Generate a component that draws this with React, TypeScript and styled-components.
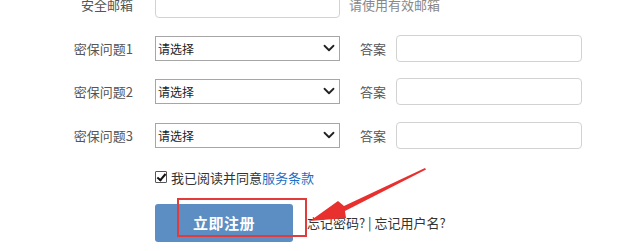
import styled, { createGlobalStyle } from "styled-components";
import { ChevronDown } from "lucide-react";

const GlobalStyle = createGlobalStyle`
  html, body {
    margin: 0;
    padding: 0;
    background: #fff;
    overflow: hidden;
  }
  body {
    font-family: "Noto Sans CJK SC", "Noto Sans", sans-serif;
    font-size: 13px;
    color: #555;
  }
`;

const Page = styled.div`
  position: relative;
  width: 620px;
  height: 251px;
  overflow: hidden;
`;

const Form = styled.div`
  display: flex;
  flex-direction: column;
  margin-top: -17px;
`;

const Row = styled.div`
  display: flex;
  align-items: center;
  height: 43.5px;
`;

const Label = styled.div`
  width: 133px;
  margin-right: 22px;
  text-align: right;
  color: #555;
  font-size: 13px;
`;

const TextInput = styled.input<{ $width?: number }>`
  box-sizing: border-box;
  width: ${(p) => p.$width ?? 185}px;
  height: 27px;
  border: 1px solid #d2d2d2;
  border-radius: 4px;
  outline: none;
  padding: 0 6px;
  font-family: inherit;
  font-size: 13px;
  background: #fff;
`;

const Hint = styled.span`
  margin-left: 9px;
  color: #888;
  font-size: 13px;
`;

const SelectBox = styled.div`
  position: relative;
  width: 185px;
  height: 25px;
`;

const Select = styled.select`
  box-sizing: border-box;
  appearance: none;
  width: 100%;
  height: 100%;
  border: 1px solid #a6a6a6;
  border-radius: 0;
  background: #fff;
  padding: 0 0 0 2px;
  font-family: inherit;
  font-size: 12px;
  color: #222;
  outline: none;
`;

const Chevron = styled(ChevronDown)`
  position: absolute;
  right: 2px;
  top: 3px;
  pointer-events: none;
  color: #222;
`;

const AnswerLabel = styled.span`
  margin-left: 20px;
  margin-right: 10px;
  color: #555;
  font-size: 13px;
`;

const AgreeRow = styled.label`
  display: flex;
  align-items: center;
  height: 40px;
  padding-left: 155px;
  color: #333;
  font-size: 13px;
`;

const Check = styled.input`
  appearance: none;
  position: relative;
  box-sizing: border-box;
  width: 12px;
  height: 12px;
  margin: 0 4px 0 0;
  border: 1px solid #555;
  border-radius: 1px;
  background: #fff;
  &:checked::after {
    content: "";
    position: absolute;
    left: 3px;
    top: 0px;
    width: 3px;
    height: 7px;
    border: solid #111;
    border-width: 0 2px 2px 0;
    transform: rotate(40deg);
  }
`;

const Terms = styled.a`
  color: #1a6fc4;
  text-decoration: none;
`;

const ActionRow = styled.div`
  display: flex;
  align-items: center;
  padding-left: 155px;
  margin-top: 6.5px;
`;

const SubmitWrap = styled.div`
  position: relative;
`;

const SubmitButton = styled.button`
  width: 138px;
  height: 38px;
  border: none;
  border-radius: 3px;
  background: #5c8ec3;
  color: #fff;
  font-family: inherit;
  font-size: 15px;
  font-weight: 700;
  letter-spacing: 0.5px;
`;

const Highlight = styled.div`
  position: absolute;
  left: 22px;
  top: -6px;
  width: 130px;
  height: 39px;
  box-sizing: border-box;
  border: 2px solid #e23b3b;
  pointer-events: none;
`;

const Forgot = styled.span`
  margin-left: 14px;
  color: #333;
  font-size: 13px;
`;

const Arrow = styled.svg`
  position: absolute;
  left: 0;
  top: 0;
  pointer-events: none;
`;

const questions = ["密保问题1", "密保问题2", "密保问题3"];

export default function App() {
  return (
    <Page>
      <GlobalStyle />
      <Form>
        <Row>
          <Label>安全邮箱</Label>
          <TextInput type="text" />
          <Hint>请使用有效邮箱</Hint>
        </Row>
        {questions.map((q) => (
          <Row key={q}>
            <Label>{q}</Label>
            <SelectBox>
              <Select defaultValue="">
                <option value="">请选择</option>
              </Select>
              <Chevron size={18} strokeWidth={2.4} />
            </SelectBox>
            <AnswerLabel>答案</AnswerLabel>
            <TextInput type="text" $width={186} />
          </Row>
        ))}
        <AgreeRow>
          <Check type="checkbox" defaultChecked />
          我已阅读并同意<Terms href="#">服务条款</Terms>
        </AgreeRow>
        <ActionRow>
          <SubmitWrap>
            <SubmitButton>立即注册</SubmitButton>
            <Highlight />
          </SubmitWrap>
          <Forgot>忘记密码? | 忘记用户名?</Forgot>
        </ActionRow>
      </Form>
      <Arrow width="620" height="251" viewBox="0 0 620 251">
        <polygon
          points="425,168 344,206 338,201 310,221 346,218 345,211 426,169.5"
          fill="#e8302e"
        />
      </Arrow>
    </Page>
  );
}
